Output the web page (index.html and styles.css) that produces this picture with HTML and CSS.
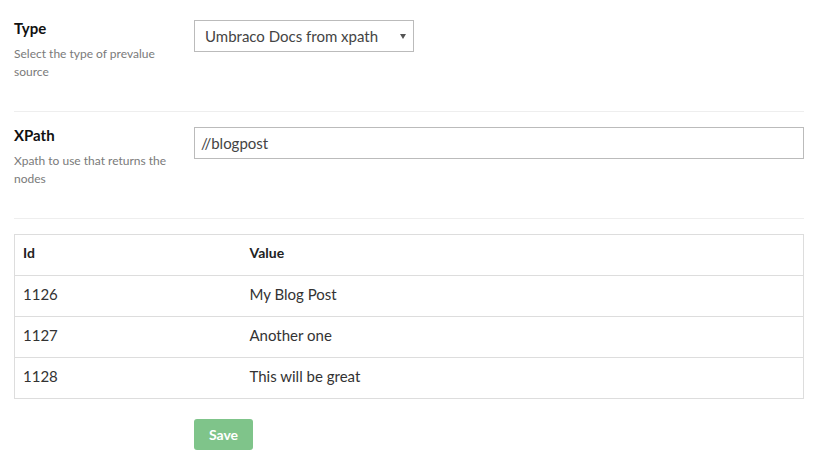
FILE: index.html
```html
<!DOCTYPE html>
<html>
<head>
<meta charset="utf-8">
<link rel="stylesheet" href="styles.css">
</head>
<body>
<div class="page">
  <div class="field">
    <div class="field-label">
      <div class="label-title">Type</div>
      <div class="label-desc">Select the type of prevalue source</div>
    </div>
    <div class="field-control">
      <div class="select">
        <span>Umbraco Docs from xpath</span>
        <svg class="caret" width="6" height="5" viewBox="0 0 6 5"><path d="M0 0H6L3 5Z" fill="#555"/></svg>
      </div>
    </div>
  </div>
  <div class="field">
    <div class="field-label">
      <div class="label-title">XPath</div>
      <div class="label-desc">Xpath to use that returns the nodes</div>
    </div>
    <div class="field-control grow">
      <div class="input">//blogpost</div>
    </div>
  </div>
  <table class="grid">
    <colgroup><col class="col-id"><col></colgroup>
    <thead>
      <tr><th>Id</th><th>Value</th></tr>
    </thead>
    <tbody>
      <tr><td>1126</td><td>My Blog Post</td></tr>
      <tr><td>1127</td><td>Another one</td></tr>
      <tr><td>1128</td><td>This will be great</td></tr>
    </tbody>
  </table>
  <div class="actions">
    <button class="btn-save">Save</button>
  </div>
</div>
</body>
</html>
```
FILE: styles.css
```css
html, body {
  margin: 0;
  padding: 0;
  background: #fff;
}
body {
  font-family: Lato, "Open Sans", "DejaVu Sans", sans-serif;
  color: #333;
}
.page {
  width: 790px;
  padding: 20px 14px 0 14px;
}
.field {
  display: flex;
  border-bottom: 1px solid #eee;
  padding-bottom: 30px;
  margin-bottom: 15px;
  height: 61px;
}
.field-label {
  width: 180px;
  flex: none;
}
.label-title {
  font-size: 15px;
  font-weight: 700;
  color: #111;
  line-height: 18px;
  margin-top: -1px;
  margin-bottom: 8px;
}
.label-desc {
  font-size: 12px;
  line-height: 18px;
  color: #7a7a7a;
  width: 160px;
}
.field-control {
  flex: none;
}
.field-control.grow {
  flex: 1;
}
.select {
  box-sizing: border-box;
  width: 220px;
  height: 32px;
  border: 1px solid #bbb;
  display: flex;
  align-items: center;
  justify-content: space-between;
  padding: 0 7px 0 10px;
  font-size: 15px;
  color: #444;
}
.caret {
  display: block;
}
.input {
  box-sizing: border-box;
  width: 100%;
  height: 32px;
  border: 1px solid #bbb;
  display: flex;
  align-items: center;
  padding: 0 6px 1px;
  font-size: 15px;
  color: #444;
}
.grid {
  width: 790px;
  table-layout: fixed;
  border-collapse: collapse;
  border: 1px solid #ddd;
  font-size: 15px;
}
.grid th, .grid td {
  text-align: left;
  padding: 8px 8px 12px;
  line-height: 20px;
  border-bottom: 1px solid #ddd;
}
.grid th {
  font-size: 14px;
  font-weight: 700;
  color: #222;
}
.grid td {
  color: #333;
}
.grid .col-id {
  width: 227px;
}
.actions {
  padding-left: 180px;
  margin-top: 20px;
}
.btn-save {
  display: block;
  width: 59px;
  height: 31px;
  border: none;
  border-radius: 3px;
  background: #7fc48a;
  color: #fff;
  font-family: Lato, "Open Sans", sans-serif;
  font-size: 14px;
  font-weight: 700;
  padding: 0;
}
```
